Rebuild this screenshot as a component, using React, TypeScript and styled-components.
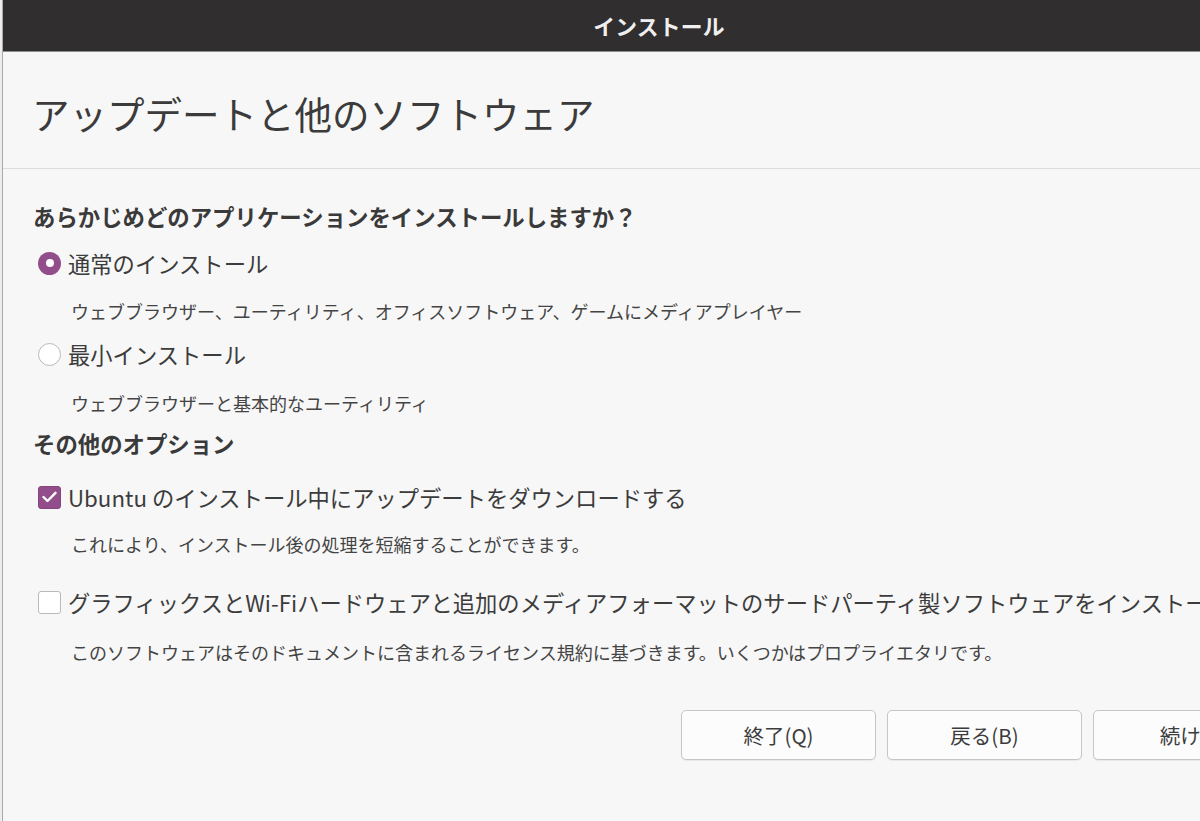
import React from "react";
import styled, { createGlobalStyle } from "styled-components";

const GlobalStyle = createGlobalStyle`
  html, body {
    margin: 0;
    padding: 0;
    width: 1200px;
    height: 821px;
    overflow: hidden;
    background: #f7f7f7;
  }
  body {
    font-family: "Noto Sans CJK JP", "Noto Sans", sans-serif;
    color: #3c3c3c;
  }
`;

const Shell = styled.div`
  display: flex;
  width: 1200px;
  height: 821px;
  overflow: hidden;
  background: #f2f2f2;
`;

const Gutter = styled.div`
  flex: 0 0 2px;
  background: #ededed;
  border-right: 1px solid #a9a9a9;
`;

const Window = styled.div`
  flex: 0 0 1312px;
  display: flex;
  flex-direction: column;
  background: #f7f7f7;
`;

const TitleBar = styled.div`
  height: 51px;
  flex: 0 0 51px;
  background: #302e2f;
  border-bottom: 1px solid #8e8e8e;
  display: flex;
  align-items: center;
  justify-content: center;
  color: #efefef;
  font-weight: 700;
  font-size: 21.8px;
  letter-spacing: 0.2px;
`;

const Header = styled.div`
  height: 117px;
  flex: 0 0 117px;
  display: flex;
  align-items: center;
  padding: 6px 0 0 29px;
  border-bottom: 1px solid #dcdcdc;
  box-sizing: border-box;
`;

const PageTitle = styled.h1`
  margin: 0;
  font-size: 37.5px;
  font-weight: 400;
  color: #3b3b3b;
  line-height: 1;
`;

const Content = styled.div`
  display: flex;
  flex-direction: column;
  padding: 31px 0 0 30px;
`;

const SectionTitle = styled.div<{ $top?: number }>`
  margin-top: ${(p) => p.$top ?? 0}px;
  height: 32px;
  line-height: 32px;
  font-size: 22.4px;
  font-weight: 700;
  color: #3a3a3a;
  white-space: nowrap;
`;

const OptionRow = styled.label<{ $top: number }>`
  margin-top: ${(p) => p.$top}px;
  height: 32px;
  display: flex;
  align-items: center;
  gap: 7px;
  padding-left: 5px;
  font-size: 22.3px;
  color: #3c3c3c;
  white-space: nowrap;
`;

const Radio = styled.span<{ $on: boolean }>`
  flex: 0 0 auto;
  width: 23px;
  height: 23px;
  border-radius: 50%;
  box-sizing: border-box;
  background: ${(p) => (p.$on ? "#924d8b" : "#ffffff")};
  border: ${(p) => (p.$on ? "none" : "1px solid #b9b9b9")};
  display: flex;
  align-items: center;
  justify-content: center;
  &::after {
    content: "";
    width: 8px;
    height: 8px;
    border-radius: 50%;
    background: #ffffff;
    display: ${(p) => (p.$on ? "block" : "none")};
  }
`;

const Check = styled.span<{ $on: boolean }>`
  flex: 0 0 auto;
  width: 23px;
  height: 23px;
  border-radius: 3px;
  box-sizing: border-box;
  background: ${(p) => (p.$on ? "#924d8b" : "#ffffff")};
  border: ${(p) => (p.$on ? "1px solid #87457f" : "1px solid #b9b9b9")};
  display: flex;
  align-items: center;
  justify-content: center;
`;

const Desc = styled.div<{ $top: number }>`
  margin-top: ${(p) => p.$top}px;
  height: 28px;
  line-height: 28px;
  padding-left: 38px;
  font-size: 18px;
  color: #444444;
  white-space: nowrap;
`;

const ButtonRow = styled.div`
  margin-top: 44px;
  display: flex;
  gap: 11px;
  padding-left: 648px;
`;

const Button = styled.button`
  width: 195px;
  height: 50px;
  box-sizing: border-box;
  border: 1px solid #c6c6c6;
  border-radius: 5px;
  background: #fcfcfc;
  box-shadow: 0 1px 1px rgba(0, 0, 0, 0.06);
  font-family: "Noto Sans CJK JP", "Noto Sans", sans-serif;
  font-size: 20.5px;
  color: #3c3c3c;
  padding: 0;
`;

const CheckMark = () => (
  <svg width="15" height="12" viewBox="0 0 15 12" fill="none">
    <polyline
      points="1.5,6 5.5,10 13.5,1.8"
      stroke="#ffffff"
      strokeWidth="2.4"
      strokeLinecap="round"
      strokeLinejoin="round"
    />
  </svg>
);

export default function App() {
  return (
    <>
      <GlobalStyle />
      <Shell>
        <Gutter />
        <Window>
          <TitleBar>インストール</TitleBar>
          <Header>
            <PageTitle>アップデートと他のソフトウェア</PageTitle>
          </Header>
          <Content>
            <SectionTitle>あらかじめどのアプリケーションをインストールしますか？</SectionTitle>
            <OptionRow $top={15}>
              <Radio $on={true} />
              通常のインストール
            </OptionRow>
            <Desc $top={18}>
              ウェブブラウザー、ユーティリティ、オフィスソフトウェア、ゲームにメディアプレイヤー
            </Desc>
            <OptionRow $top={13}>
              <Radio $on={false} />
              最小インストール
            </OptionRow>
            <Desc $top={19}>ウェブブラウザーと基本的なユーティリティ</Desc>
            <SectionTitle $top={10}>その他のオプション</SectionTitle>
            <OptionRow $top={22}>
              <Check $on={true}>
                <CheckMark />
              </Check>
              Ubuntu のインストール中にアップデートをダウンロードする
            </OptionRow>
            <Desc $top={17}>
              これにより、インストール後の処理を短縮することができます。
            </Desc>
            <OptionRow $top={28}>
              <Check $on={false} />
              グラフィックスとWi-Fiハードウェアと追加のメディアフォーマットのサードパーティ製ソフトウェアをインストールする
            </OptionRow>
            <Desc $top={20}>
              このソフトウェアはそのドキュメントに含まれるライセンス規約に基づきます。いくつかはプロプライエタリです。
            </Desc>
            <ButtonRow>
              <Button>終了(Q)</Button>
              <Button>戻る(B)</Button>
              <Button>続ける</Button>
            </ButtonRow>
          </Content>
        </Window>
      </Shell>
    </>
  );
}
